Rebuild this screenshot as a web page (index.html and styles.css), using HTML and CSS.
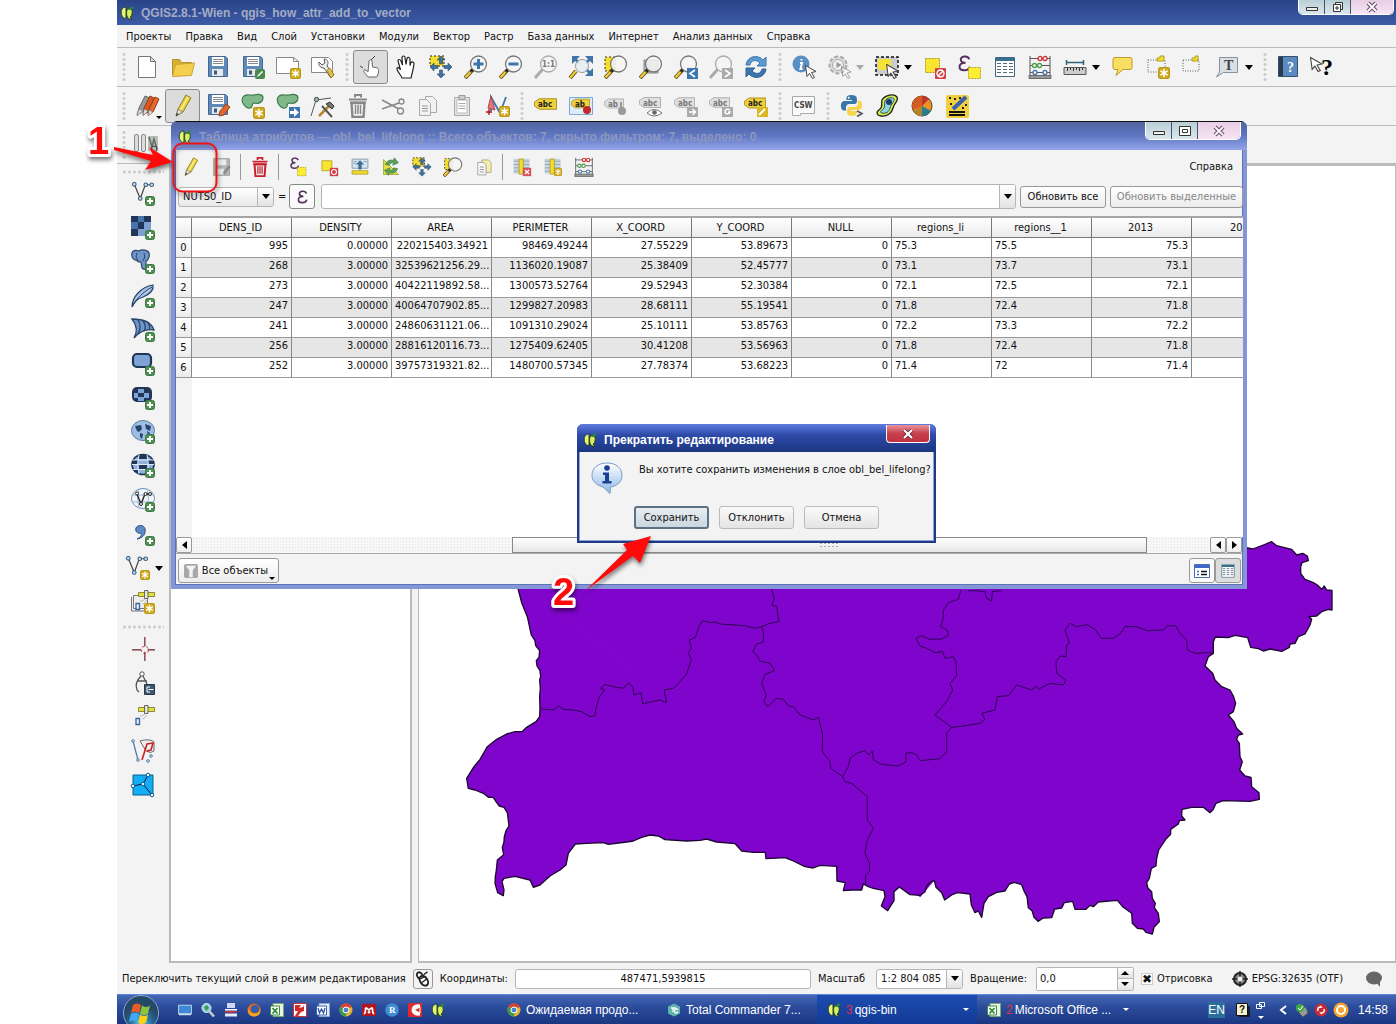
FILE: index.html
```html
<!DOCTYPE html>
<html lang="ru">
<head>
    <meta charset="UTF-8">
    <meta name="viewport" content="width=device-width, initial-scale=1.0">
    <title>QGIS2.8.1-Wien - qgis_how_attr_add_to_vector</title>
    <link rel="stylesheet" href="styles.css">
</head>
<body>
    <!-- Shared icon shapes -->
    <svg class="defs" aria-hidden="true">
        <defs>
            <linearGradient id="bubble" x2="0" y2="1"><stop stop-color="#fff"/><stop offset="1" stop-color="#8cb8e8"/></linearGradient>
            <radialGradient id="orb" cx=".5" cy=".8"><stop stop-color="#5fd0e8"/><stop offset=".6" stop-color="#2a6c9c"/><stop offset="1" stop-color="#254a68"/></radialGradient>
        </defs>
        <symbol id="plus" viewBox="0 0 10 10"><rect x=".5" y=".5" width="9" height="9" rx="2" fill="#4f8f52" stroke="#3d7a42"/><path d="M5 2v6M2 5h6" stroke="#fff" stroke-width="2"/></symbol>
        <symbol id="star" viewBox="0 0 10 10"><rect x=".5" y=".5" width="9" height="9" rx="1.5" fill="#d1ad1e" stroke="#b8961a"/><path d="M5 1.5v7M2 3.2l6 3.6M8 3.2L2 6.800" stroke="#fff" stroke-width="1.3"/></symbol>
        <symbol id="mag" viewBox="0 0 24 24"><path d="M1 23l7.500-8" stroke="#5c4b16" stroke-width="4"/><path d="M1.500 22.500l5-5.500" stroke="#f0cc3c" stroke-width="2.400"/><path d="M7.500 16l2-2" stroke="#111" stroke-width="3"/><circle cx="14.500" cy="9" r="8" fill="#f4f4f2" fill-opacity=".85" stroke="#777" stroke-width="1.300"/></symbol>
        <symbol id="maggray" viewBox="0 0 24 24"><path d="M1 23l8-9" stroke="#aaa" stroke-width="3"/><circle cx="14.500" cy="9" r="8" fill="#f4f4f4" stroke="#aaa" stroke-width="1.300"/></symbol>
        <symbol id="pencil" viewBox="0 0 24 24"><path d="M5 22l2-7L15 1l5 3-8 14z" fill="#e6cf3a" stroke="#8d7f28"/><path d="M17 3L9 17" stroke="#fff39a" stroke-width="1.500"/><path d="M5 22l2-7 5 3z" fill="#e8dcc0" stroke="#777" stroke-width=".8"/><path d="M5 22l.8-3 2 1.200z" fill="#333"/></symbol>
        <symbol id="floppy" viewBox="0 0 24 24"><path d="M2.500 1.500h17l2 2v18h-19z" fill="#5e89b8" stroke="#44688f"/><path d="M6 2h12v9H6z" fill="#fff"/><path d="M7 4.500h10M7 6.500h10M7 8.500h10" stroke="#888"/><path d="M6 14h11v7H6z" fill="#e8e8e8"/><path d="M8 15.500h3v4H8z" fill="#355b86"/></symbol>
        <symbol id="label" viewBox="0 0 24 12"><path d="M5.500.500h18v11h-18L.500 8V4z" fill="#f0d03a" stroke="#a98f1c"/></symbol>
        <symbol id="labelgray" viewBox="0 0 24 12"><path d="M5.500.500h18v11h-18L.500 8V4z" fill="#e0e0e0" stroke="#aaa"/></symbol>
        <symbol id="cursor" viewBox="0 0 12 14"><path d="M.500.500l10.500 6-4.500 1 3 5-2 1-3-5-2.500 3z" fill="#fff" stroke="#444"/></symbol>
        <symbol id="eps" viewBox="0 0 12 16"><path d="M10.500 4C9 0 2 1 2.500 4.500 2.700 7 5.500 7.300 7 7.300 3 7.300 1 9 1.300 11.500 1.700 15.500 10 15.500 11 11" fill="none" stroke="#56305c" stroke-width="1.900"/></symbol>
        <symbol id="abacus" viewBox="0 0 24 24"><path d="M2 1v21M22 1v21M2 3.500h20M2 10.500h20M2 17.500h20" stroke="#555" fill="none"/><path d="M1 20.500h22v3H1z" fill="#999" stroke="#555" stroke-width=".8"/><g fill="#fff" stroke-width="1.300"><g stroke="#c33"><circle cx="12" cy="3.500" r="2"/><circle cx="17" cy="3.500" r="2"/></g><g stroke="#4a9a4a"><circle cx="6.500" cy="10.500" r="2"/><circle cx="11.500" cy="10.500" r="2"/></g><g stroke="#4477a8"><circle cx="7" cy="17.500" r="2"/><circle cx="17" cy="17.500" r="2"/></g></g></symbol>
        <symbol id="sheet" viewBox="0 0 24 24"><path d="M2.500 2.500h19v19h-19z" fill="#fff" stroke="#3f6980"/><path d="M3 3h18v3H3z" fill="#38718f"/><path d="M4 8.500h4M10 8.500h4M16 8.500h4M4 11.500h4M10 11.500h4M16 11.500h4M4 14.500h4M10 14.500h4M16 14.500h4M4 17.500h4M10 17.500h4M16 17.500h4" stroke="#506b7a" stroke-width="1.200"/></symbol>
        <symbol id="trash" viewBox="0 0 24 24"><path d="M9 3.500V1h6v2.500M3 5.500h18M4 8.500h16" fill="none" stroke="currentColor" stroke-width="2"/><path d="M5.500 9h13l-1 14h-11z" fill="none" stroke="currentColor" stroke-width="2.400"/><path d="M9.500 11v9M12 11v9M14.500 11v9" stroke="currentColor" stroke-width="1.500"/></symbol>
        <symbol id="movesel" viewBox="0 0 24 24"><path d="M1 1h14v10H1z" fill="#f5dd2c" stroke="#222" stroke-dasharray="2"/><g fill="#41719f" stroke="#2b4d70" stroke-width=".6"><path d="M12 1l4 4h-2.500v4h-3V5H8z"/><path d="M12 23l4-4h-2.500v-4h-3v4H8z"/><path d="M1 12l4-4v2.500h4v3H5V16z"/><path d="M23 12l-4-4v2.500h-4v3h4V16z"/></g></symbol>
        <symbol id="vect" viewBox="0 0 24 24"><path d="M2.500 2.500L9 18l5.500-15h7" fill="none" stroke="#444" stroke-width="1.300"/><g fill="#c9dcf0" stroke="#33587c" stroke-width="1.100"><circle cx="2.500" cy="2.500" r="2"/><circle cx="9" cy="18" r="2"/><circle cx="15" cy="3" r="2"/><circle cx="21.500" cy="3" r="2"/></g></symbol>
        <symbol id="copy" viewBox="0 0 24 24"><g fill="#f2f2f2" stroke="#aaa"><path d="M9.500 2.500h7l4 4v12h-11z"/><path d="M3.500 5.500h7l4 4v12h-11z"/></g><path d="M6 12h6M6 14.500h6M6 17h6" stroke="#999"/></symbol>
        <symbol id="qgis" viewBox="0 0 14 14"><path d="M6 1C2 1 .500 5 1.500 8.500S5 13 6 12z" fill="#e4f57a" stroke="#173b16" stroke-width=".9"/><path d="M7.500 3C10.500 1.500 13 4 12 8c-.5 2-1 2.500-2 3l2 2.500-2.500-.5C6 12 6 5 7.500 3z" fill="#d9ee5a" stroke="#173b16" stroke-width=".9"/><path d="M8 4l3-3.500 2.500.500-2 3z" fill="#2e8a35"/></symbol>
        <symbol id="funnel" viewBox="0 0 16 16"><rect width="16" height="16" rx="2" fill="#a8a8a8"/><path d="M2 2h12l-4 5v8H6V7z" fill="#f2f2f2"/></symbol>
        <symbol id="sat" viewBox="0 0 24 24"><path d="M7.500 2.500h16v4h-16z" fill="#e2e043" stroke="#8d8a28"/><path d="M13.500.500h3.500v8h-3.500z" fill="#e8e8c8" stroke="#666"/><path d="M9 11c2 0 4-1 5-2M11 14c2 0 4-2 4.500-4" fill="none" stroke="#bbb"/><path d="M5 13.500h3.500v6H5z" fill="#eef" stroke="#3864a0" stroke-width="1.300"/></symbol>
        <symbol id="chrome" viewBox="0 0 14 14"><circle cx="7" cy="7" r="6.500" fill="#e3b52c"/><path d="M7 7L1.400 3.700A6.500 6.500 0 0 1 13 4.500H7z" fill="#d8402f"/><path d="M7 7L1.400 3.700A6.500 6.500 0 0 0 6.500 13.500L9 8z" fill="#3e9a4a"/><circle cx="7" cy="7" r="3" fill="#4a83d0" stroke="#fff"/></symbol>
        <symbol id="excel" viewBox="0 0 14 14"><path d="M3 .500h10.500v13H3z" fill="#e9f5e4" stroke="#7ba574"/><path d="M.500 3h9v9h-9z" fill="#fff" stroke="#3b8b3e"/><path d="M2.500 5l5 5.500M7.500 5l-5 5.500" stroke="#2c8a31" stroke-width="1.800"/></symbol>
        <symbol id="tc" viewBox="0 0 14 14"><path d="M7 .500l6 3v7l-6 3-6-3v-7z" fill="#5fb3a8"/><path d="M4 5h5M6 5v4M11 7c-1-2-4-1-3.500 1.500.5 2 3 2 3.500 0" stroke="#fff" fill="none" stroke-width="1.300"/></symbol>
    </svg>

    <header class="titlebar">
        <svg class="logo"><use href="#qgis"/></svg>
        <h1>QGIS2.8.1-Wien - qgis_how_attr_add_to_vector</h1>
        <div class="winbuttons main-buttons">
            <button type="button" aria-label="Свернуть"><svg viewBox="0 0 14 12"><path d="M1.500 6.500h11v3h-11z" fill="#eee" stroke="#333"/></svg></button>
            <button type="button" aria-label="Развернуть"><svg viewBox="0 0 14 12"><path d="M4.500 1.500h7v7h-7z" fill="#eee" stroke="#333"/><path d="M2.500 3.500h7v7h-7zM5 6h2v2H5z" fill="#fff" stroke="#333"/></svg></button>
            <button type="button" class="close" aria-label="Закрыть"><svg viewBox="0 0 14 12"><path d="M3 2l8 8M11 2l-8 8" stroke="#6b4a6b" stroke-width="4"/><path d="M3 2l8 8M11 2l-8 8" stroke="#fff" stroke-width="1.800"/></svg></button>
        </div>
    </header>

    <nav class="menubar">
        <a href="#">Проекты</a>
        <a href="#">Правка</a>
        <a href="#">Вид</a>
        <a href="#">Слой</a>
        <a href="#">Установки</a>
        <a href="#">Модули</a>
        <a href="#">Вектор</a>
        <a href="#">Растр</a>
        <a href="#">База данных</a>
        <a href="#">Интернет</a>
        <a href="#">Анализ данных</a>
        <a href="#">Справка</a>
    </nav>

    <div class="toolbar">
        <span class="grip"></span>
        <button type="button" aria-label="Создать"><svg viewBox="0 0 24 24"><path d="M2.500 1.500h12l5 5v16h-17z" fill="#fff" stroke="#777"/><path d="M14.500 1.500v5h5z" fill="#ddd" stroke="#777"/></svg></button>
        <button type="button" aria-label="Открыть"><svg viewBox="0 0 24 24"><path d="M1.500 20V4.500h7l2 3h10V10" fill="#d9b032" stroke="#b8932a"/><path d="M1.500 21.500l3-12 19-1.500-3 12.500z" fill="#f3cf4d" stroke="#cba635"/></svg></button>
        <button type="button" aria-label="Сохранить"><svg><use href="#floppy"/></svg></button>
        <button type="button" aria-label="Сохранить как"><svg viewBox="0 0 24 24"><use href="#floppy"/><rect x="14" y="14" width="10" height="10" rx="2" fill="#4b8a4e"/><path d="M16 22l1-2 4-4 1 1-4 4z" fill="#fff"/></svg></button>
        <button type="button" aria-label="Новый макет"><svg viewBox="0 0 24 24"><path d="M.500 2.500h17l5 4v12h-22z" fill="#fff" stroke="#888"/><path d="M17.500 2.500v4h5" fill="none" stroke="#888"/><use href="#star" x="14" y="13" width="11" height="11"/></svg></button>
        <button type="button" aria-label="Макеты"><svg viewBox="0 0 24 24"><path d="M.500 2.500h17l4 4v11h-21z" fill="#fff" stroke="#888"/><path d="M8 7l3 3 3-2-1-4c4 0 5 4 3 7l7 9-3 3-7-10c-3 0-6-2-5-6z" fill="#eee" stroke="#555"/><path d="M16 15l3-2 4 7-3 3z" fill="#e8bf35" stroke="#7c681e" stroke-width=".6"/></svg></button>
        <span class="grip"></span>
        <button type="button" class="pressed" aria-label="Касание"><svg viewBox="0 0 24 24"><path d="M9 22c-2-3-5-5-4-7 1-1 3 1 4 2l1-11c1-2 3-1 3 0l.500 6 5 1c2 1 1 7-1 9z" fill="#fff" stroke="#666"/><path d="M12 5l4-4M4 13l-3-2" stroke="#444"/></svg></button>
        <button type="button" aria-label="Прокрутка"><svg viewBox="0 0 24 24"><path d="M8 23c-1-3-6-8-5-10 1-1 3 0 3.500 2L4 6c0-2 2-2 3 0l1.500 4L8 2.500c0-2 3-2 3 0l1 7 1-6c1-2 3-1 3 1v6l1-3c1-1 3-.500 3 1-.5 6-2 10-3 14.500z" fill="#fff" stroke="#222" stroke-width="1.200"/></svg></button>
        <button type="button" aria-label="К выделенному"><svg><use href="#movesel"/></svg></button>
        <button type="button" aria-label="Увеличить"><svg viewBox="0 0 24 24"><use href="#mag"/><path d="M14.500 4v10M9.500 9h10" stroke="#3d75ae" stroke-width="3"/></svg></button>
        <button type="button" aria-label="Уменьшить"><svg viewBox="0 0 24 24"><use href="#mag"/><path d="M9.500 9h10" stroke="#3d75ae" stroke-width="3"/></svg></button>
        <button type="button" aria-label="Масштаб 1:1"><svg viewBox="0 0 24 24"><use href="#maggray"/><text class="tiny gray" x="8" y="12">1:1</text></svg></button>
        <button type="button" aria-label="Полный охват"><svg viewBox="0 0 24 24"><g fill="#3f74a6"><path d="M3 1h8L8 4l3 3-2 2-3-3-3 3zM24 1v8l-3-3-3 3-2-2 3-3-3-3zM24 21v-8l-3 3-3-3-2 2 3 3-3 3z"/></g><path d="M1 23l6-7" stroke="#665517" stroke-width="4"/><path d="M1 23l6-7" stroke="#f0cc3c" stroke-width="2"/><circle cx="13" cy="11" r="6.500" fill="#e7eef4" fill-opacity=".8" stroke="#999"/></svg></button>
        <button type="button" aria-label="Увеличить до выделенного"><svg viewBox="0 0 24 24"><path d="M1 2h10v14H1z" fill="#f5dd2c" stroke="#333" stroke-dasharray="2"/><use href="#mag"/></svg></button>
        <button type="button" aria-label="Увеличить до слоя"><svg viewBox="0 0 24 24"><path d="M5 5h14v13H5z" fill="#bbb" stroke="#888"/><use href="#mag"/></svg></button>
        <button type="button" aria-label="Предыдущий охват"><svg viewBox="0 0 24 24"><use href="#mag"/><path d="M13 13h11v11H13z" fill="#3d75ae"/><path d="M21 15l-5 3.500 5 3.500" stroke="#fff" stroke-width="1.600" fill="none"/></svg></button>
        <button type="button" aria-label="Следующий охват"><svg viewBox="0 0 24 24"><use href="#maggray"/><path d="M13 13h11v11H13z" fill="#aaa"/><path d="M16 15l5 3.500-5 3.500" stroke="#fff" stroke-width="1.600" fill="none"/></svg></button>
        <button type="button" aria-label="Обновить"><svg viewBox="0 0 24 24"><path d="M2 10C3 1 14-1 19 5l3-3v9h-9l3-3C12 4 7 5 6 10z" fill="#5c9bd0" stroke="#3d75ae"/><path d="M22 14c-1 9-12 11-17 5l-3 3v-9h9l-3 3c4 4 9 3 10-2z" fill="#3d75ae" stroke="#2f6296"/></svg></button>
        <span class="grip"></span>
        <button type="button" aria-label="Определить объекты"><svg viewBox="0 0 24 24"><circle cx="9" cy="9" r="8.500" fill="#5a8fc4"/><path d="M9.500 4v1.500M8 8h2l-1.500 6h2" stroke="#fff" stroke-width="2" fill="none"/><use href="#cursor" x="13" y="10" width="12" height="14"/></svg></button>
        <button type="button" aria-label="Действие"><svg viewBox="0 0 24 24"><circle cx="11" cy="10" r="8.500" fill="#ddd" stroke="#aaa" stroke-width="2" stroke-dasharray="4 2"/><circle cx="11" cy="10" r="5.500" fill="#eee" stroke="#aaa"/><path d="M9.500 7l5 3-5 3z" fill="#999"/><use href="#cursor" x="14" y="11" width="11" height="13" opacity=".5"/></svg></button>
        <span class="more off"></span>
        <button type="button" aria-label="Выделение"><svg viewBox="0 0 24 24"><path d="M1 2h22v18H1z" fill="#c9cdd0" stroke="#111" stroke-width="1.500" stroke-dasharray="3 2"/><path d="M3 4h13v11H3z" fill="#f7e23a"/><use href="#cursor" x="11" y="9" width="13" height="15"/></svg></button>
        <span class="more"></span>
        <button type="button" aria-label="Снять выделение"><svg viewBox="0 0 24 24"><path d="M2.500 3.500h14v14h-14z" fill="#f9e52f" stroke="#b09c20" stroke-dasharray="2 1"/><rect x="12" y="13" width="11" height="11" rx="1" fill="#d04048"/><circle cx="17.500" cy="18.500" r="3.500" fill="none" stroke="#fff" stroke-width="1.400"/><path d="M15 21l5-5" stroke="#fff" stroke-width="1.400"/></svg></button>
        <button type="button" aria-label="Выделить по выражению"><svg viewBox="0 0 24 24"><use href="#eps" width="13" height="17"/><path d="M10.500 12.500h12v11h-12z" fill="#fbee33" stroke="#b8a51f" stroke-dasharray="2 1"/></svg></button>
        <button type="button" aria-label="Таблица атрибутов"><svg><use href="#sheet"/></svg></button>
        <button type="button" aria-label="Калькулятор полей"><svg><use href="#abacus"/></svg></button>
        <button type="button" aria-label="Измерить"><svg viewBox="0 0 24 24"><path d="M3 7.500h18M3.500 5v5M20.500 5v5" stroke="#2f5f7c" stroke-width="1.500"/><path d="M1 12.500h22v7H1z" fill="#ccc" stroke="#555"/><path d="M4.500 13v3M7.500 13v2M10.500 13v3M13.500 13v2M16.500 13v3M19.500 13v2" stroke="#333"/></svg></button>
        <span class="more"></span>
        <button type="button" aria-label="Подсказки"><svg viewBox="0 0 24 24"><path d="M3 2.500h16q2 0 2 2v8q0 2-2 2h-7L5 20.500l2-6H4q-2 0-2-2v-8q0-2 2-2z" fill="#f8df62" stroke="#c09a2a"/></svg></button>
        <button type="button" aria-label="Новая закладка"><svg viewBox="0 0 24 24"><path d="M2 5h17v12H2z" fill="none" stroke="#555" stroke-dasharray="1 1.500"/><path d="M11 6V3h3V1h4v5z" fill="#f2dc35" stroke="#b09c20"/><use href="#star" x="12" y="12" width="12" height="12"/></svg></button>
        <button type="button" aria-label="Закладки"><svg viewBox="0 0 24 24"><path d="M2 5h16v11H2z" fill="none" stroke="#555" stroke-dasharray="1 1.500"/><path d="M11 6V3h3V1h3v5z" fill="#f2dc35" stroke="#b09c20"/></svg></button>
        <button type="button" aria-label="Аннотация"><svg viewBox="0 0 24 24"><path d="M3.500 2.500h18v15h-14L.500 22l3-5z" fill="#d8dfe6" stroke="#8a929a"/><text class="serif" x="8" y="15">T</text></svg></button>
        <span class="more"></span>
        <span class="grip"></span>
        <button type="button" aria-label="Содержание"><svg viewBox="0 0 24 24"><path d="M1.500 1.500h19v20h-19z" fill="#5a8ac0" stroke="#33506e"/><path d="M2 2h4v19H2z" fill="#2a3b4c"/><text class="serif white" x="10" y="17">?</text></svg></button>
        <button type="button" aria-label="Что это?"><svg viewBox="0 0 24 24"><use href="#cursor" x="-2" y="1" width="13" height="17"/><text class="serif big" x="9" y="20">?</text></svg></button>
    </div>

    <div class="toolbar">
        <span class="grip"></span>
        <button type="button" class="has-menu" aria-label="Текущие правки"><svg viewBox="0 0 24 24"><path d="M1 21l2-7L9 2l5 2-6 13z" fill="#999" stroke="#666"/><path d="M7 21l1-7 6-12 4 2-6 14z" fill="#e0561e" stroke="#8d3c1a"/><path d="M12 21l1-6 6-12 4 2-6 13z" fill="#e8682c" stroke="#8d3c1a"/><path d="M1 22l2-7 4 2zM7 22l1-7 4 2zM12 22l1-6 4 2z" fill="#ddd" stroke="#777" stroke-width=".6"/></svg></button>
        <button type="button" class="pressed" aria-label="Режим редактирования"><svg><use href="#pencil"/></svg></button>
        <button type="button" aria-label="Сохранить правки"><svg viewBox="0 0 24 24"><use href="#floppy" y="-1"/><path d="M13 22l1-5 6-7 4 3-6 8z" fill="#e0662e" stroke="#8d4a25"/></svg></button>
        <button type="button" aria-label="Добавить объект"><svg viewBox="0 0 24 24"><path d="M2 3C5-1 9 2 13 1s9-1 9 3-4 6-8 5c-2 0-3 1-3 3s-3 3-6 1S0 6 2 3z" fill="#7fb98a" stroke="#3e7a4c" stroke-width="1.200"/><use href="#star" x="12" y="13" width="12" height="12"/></svg></button>
        <button type="button" aria-label="Переместить объект"><svg viewBox="0 0 24 24"><path d="M2 3C5-1 9 2 13 1s9-1 9 3-4 6-8 5c-2 0-3 1-3 3s-3 3-6 1S0 6 2 3z" fill="#7fb98a" stroke="#3e7a4c" stroke-width="1.200"/><path d="M13 13h11v11H13z" fill="#3d75ae"/><path d="M14 17h4v-3l5 4.500-5 4.500v-3h-4z" fill="#fff"/></svg></button>
        <button type="button" aria-label="Узлы"><svg viewBox="0 0 24 24"><path d="M5 6L0 22M5 6l15-2" stroke="#555"/><circle cx="5.500" cy="5.500" r="2.200" fill="#9ab79f" stroke="#444"/><path d="M8 22L19 11" stroke="#b98030" stroke-width="2.500"/><path d="M11 12l10 11" stroke="#555" stroke-width="2"/><path d="M15 10l4-2 4 4-2 3z" fill="#777" stroke="#333"/></svg></button>
        <button type="button" class="trash-gray" aria-label="Удалить выделенное"><svg><use href="#trash"/></svg></button>
        <button type="button" aria-label="Вырезать"><svg viewBox="0 0 24 24"><path d="M1 6l17 9M1 15l17-6" stroke="#888" stroke-width="1.600"/><circle cx="20.500" cy="7.500" r="2.500" fill="none" stroke="#888" stroke-width="1.300"/><circle cx="19.500" cy="17" r="3" fill="none" stroke="#888" stroke-width="1.300"/></svg></button>
        <button type="button" aria-label="Копировать"><svg><use href="#copy"/></svg></button>
        <button type="button" aria-label="Вставить"><svg viewBox="0 0 24 24"><path d="M3.500 3.500h15v18h-15z" fill="#e4e4e4" stroke="#aaa"/><path d="M6 6h10v13H6z" fill="#fff" stroke="#bbb"/><path d="M8 1.500h6v4H8z" fill="#ccc" stroke="#999"/><path d="M7.500 9.500h7M7.500 12h7M7.500 14.500h7" stroke="#aaa"/></svg></button>
        <button type="button" aria-label="Расширенная оцифровка"><svg viewBox="0 0 24 24"><path d="M5 17V3l9 16 6-16" fill="none" stroke="#3d75ae" stroke-width="1.800"/><path d="M2 14l3-12 4 14z" fill="#e0787c" stroke="#b0484c"/><path d="M3 15v6M0 18h6" stroke="#a11" stroke-width="1.300"/><use href="#star" x="13" y="12" width="11" height="11"/></svg></button>
        <span class="grip"></span>
        <button type="button" aria-label="Подписи"><svg viewBox="0 0 24 24"><use href="#label" x="0" y="4" width="23" height="12"/><text class="tiny" x="4" y="13">abc</text></svg></button>
        <button type="button" aria-label="Закреплённые подписи"><svg viewBox="0 0 24 24"><path d="M.500 3.500h23v17H.500z" fill="#dcecfb" stroke="#7fa8d6"/><use href="#label" x="2" y="4" width="19" height="11"/><text class="tiny" x="6" y="13">ab</text><circle cx="18" cy="16" r="4" fill="#c3282d"/></svg></button>
        <button type="button" aria-label="Закрепить подпись"><svg viewBox="0 0 24 24"><use href="#labelgray" x="0" y="4" width="20" height="11"/><text class="tiny gray" x="4" y="13">ab</text><circle cx="18" cy="17" r="4" fill="#999"/><path d="M17 8v7" stroke="#999" stroke-width="2"/></svg></button>
        <button type="button" aria-label="Показать подпись"><svg viewBox="0 0 24 24"><use href="#labelgray" x="0" y="3" width="22" height="11"/><text class="tiny gray" x="4" y="12">abc</text><path d="M8 19q7-7 15 0-8 6-15 0z" fill="#fff" stroke="#777"/><circle cx="15.500" cy="18.500" r="2.300" fill="#666"/></svg></button>
        <button type="button" aria-label="Переместить подпись"><svg viewBox="0 0 24 24"><use href="#labelgray" x="0" y="3" width="21" height="11"/><text class="tiny gray" x="4" y="12">abc</text><path d="M13 13h11v10H13z" fill="#aaa"/><path d="M15 18h6M18.500 15l3 3-3 3" stroke="#fff" stroke-width="1.500" fill="none"/></svg></button>
        <button type="button" aria-label="Повернуть подпись"><svg viewBox="0 0 24 24"><use href="#labelgray" x="0" y="3" width="21" height="11"/><text class="tiny gray" x="4" y="12">abc</text><path d="M13 13h11v10H13z" fill="#aaa"/><path d="M21 16c-3-2-5 0-5 2s4 3 5 0h-2" stroke="#fff" stroke-width="1.500" fill="none"/></svg></button>
        <button type="button" aria-label="Изменить подпись"><svg viewBox="0 0 24 24"><use href="#label" x="0" y="3" width="22" height="12"/><text class="tiny" x="4" y="12">abc</text><path d="M13 13h11v10H13z" fill="#d9b622"/><path d="M15 21l6-6" stroke="#fff" stroke-width="2"/></svg></button>
        <span class="grip"></span>
        <button type="button" aria-label="CSW"><svg viewBox="0 0 24 24"><path d="M.500 2.500h22v17h-14v2h-8z" fill="#fafafa" stroke="#aaa"/><text class="mono" x="2" y="14">CSW</text></svg></button>
        <span class="grip"></span>
        <button type="button" aria-label="Консоль Python"><svg viewBox="0 0 24 24"><path d="M11 1c-5 0-4.500 3-4.500 5H12v1H4c-4 0-4 9-.500 9.500H6V13c0-2 2-3 3-3h5c3 0 3-2 3-4s0-5-6-5z" fill="#3b76a8"/><path d="M12 22c5 0 5-3 5-5h-6v-1h8c4 0 4-9 .500-9.500H18V10c0 2-2 3-3 3h-5c-2 0-3 2-3 4s0 5 5 5z" fill="#f7d44c"/><circle cx="8.800" cy="3.700" r="1" fill="#fff"/><path d="M17 17l5 2.500-5 3" fill="none" stroke="#555" stroke-width="1.600"/></svg></button>
        <button type="button" aria-label="Интерполяция"><svg viewBox="0 0 24 24"><path d="M7 6C10 1 19-1 22 3c2 4-3 6-4 11s-6 9-12 8-4-5-1-7 1-6 2-9z" fill="#d8ec4e" stroke="#222" stroke-width="1.300"/><path d="M10 7c2-4 8-4 9-2s-3 5-4 9-4 6-8 5 1-3 2-5 0-4 1-7z" fill="#8fd1e8" stroke="#2a5b3a"/><circle cx="14" cy="8" r="3" fill="#1f3b6e"/></svg></button>
        <button type="button" aria-label="Статистика"><svg viewBox="0 0 24 24"><circle cx="12" cy="12" r="10" fill="#e89322" stroke="#60411c"/><path d="M12 12V2A10 10 0 0 0 3 16z" fill="#d45a26"/><path d="M12 12l9 5a10 10 0 0 1-9 5z" fill="#2a7d8c"/><path d="M12 12v10a10 10 0 0 1-8.500-5z" fill="#b5832a"/><path d="M12 12V2a10 10 0 0 1 7 3z" fill="#c23427"/></svg></button>
        <button type="button" aria-label="Оцифровщик"><svg viewBox="0 0 24 24"><rect x="1" y="1" width="23" height="23" rx="2" fill="#efcf3d"/><path d="M4 3h2v2H4zM9 4h2v2H9zM5 9h2v2H5zM14 3h2v2h-2zM17 13h2v2h-2zM20 10h2v2h-2z" fill="#222"/><path d="M21 3L8 15" stroke="#3c5fb0" stroke-width="4"/><path d="M4 18h16M4 21h16" stroke="#111" stroke-width="2"/></svg></button>
    </div>

    <div class="toolbar labelbar">
        <span class="grip"></span>
        <button type="button" aria-label="Гистограмма"><svg viewBox="0 0 24 24"><g fill="#ddd" stroke="#888"><rect x="-1.500" y="1.500" width="4" height="17" rx="1.500"/><rect x="5.500" y="1.500" width="4" height="17" rx="1.500"/></g><path d="M12 3h10v15H12z" fill="#bbb"/><path d="M13 4l3 10 2-8 3 10" stroke="#5d6f60" stroke-width="1.500" fill="none"/><circle cx="18" cy="16" r="3" fill="none" stroke="#444"/></svg></button>
    </div>

    <main class="workspace">
        <div class="sidebar">
            <span class="grip-h"></span>
            <button type="button" aria-label="Векторный слой"><svg viewBox="0 0 24 24"><use href="#vect" width="24" height="22"/><use href="#plus" x="14" y="14" width="10" height="10"/></svg></button>
            <button type="button" aria-label="Растровый слой"><svg viewBox="0 0 24 24"><path d="M0 0h20v20H0z" fill="#7ea0d0"/><path d="M0 0h7v6H0zM13 0h7v6h-7zM7 6h6v7H7zM0 13h7v7H0z" fill="#1f3658"/><path d="M7 0h6v6H7zM0 6h7v7H0z" fill="#4a72ab"/><use href="#plus" x="14" y="14" width="10" height="10"/></svg></button>
            <button type="button" aria-label="PostGIS"><svg viewBox="0 0 24 24"><path d="M1 3c1-3 4-3 7-2 3-2 9-1 10 2s-1 8-3 8v6q-1 4-4 1l-1-6c-3 0-4-1-4-2-3 1-6-3-5-7z" fill="#6f95c9" stroke="#2a4468" stroke-width="1.200"/><path d="M6 3q-2 5 1 7M13 3q2 4-1 8" fill="none" stroke="#2a4468"/><use href="#plus" x="14" y="14" width="10" height="10"/></svg></button>
            <button type="button" aria-label="SpatiaLite"><svg viewBox="0 0 24 24"><path d="M1 23C1 13 10 3 22 1c1 5-3 9-10 12-6 2-8 4-11 10z" fill="#a9c5e8" stroke="#2a4468" stroke-width="1.200"/><path d="M1 23C6 14 12 8 21 3" fill="none" stroke="#2a4468"/><use href="#plus" x="14" y="14" width="10" height="10"/></svg></button>
            <button type="button" aria-label="MSSQL"><svg viewBox="0 0 24 24"><path d="M1 1c10 0 19 2 22 11-6-1-13 0-20 8 4-7 2-14-2-19z" fill="#6f95c9" stroke="#2a4468" stroke-width="1.300"/><path d="M7 2c3 5 3 9 0 14M12 3c3 4 3 7 1 10M17 5c2 3 2 5 1 7" fill="none" stroke="#2a4468" stroke-width="1.300"/><use href="#plus" x="14" y="14" width="10" height="10"/></svg></button>
            <button type="button" aria-label="Oracle"><svg viewBox="0 0 24 24"><rect x="2" y="2" width="18" height="13" rx="4" fill="#7ea3d6" stroke="#1f3658" stroke-width="2.200"/><use href="#plus" x="14" y="14" width="10" height="10"/></svg></button>
            <button type="button" aria-label="Oracle растр"><svg viewBox="0 0 24 24"><rect x="1" y="1" width="20" height="15" rx="5" fill="#1f3658"/><path d="M7 3h6v4H7zM3 7h4v5H3zM13 7h5v5h-5zM7 11h6v4H7z" fill="#7ea3d6"/><use href="#plus" x="14" y="14" width="10" height="10"/></svg></button>
            <button type="button" aria-label="WMS"><svg viewBox="0 0 24 24"><ellipse cx="12" cy="10.500" rx="11.500" ry="10" fill="#9dbde4" stroke="#5b7ba4"/><path d="M4 6l6-1 1 4-3 3-2-1zM14 4l6 2-1 5-4-2zM9 13l3 1-1 5-2-2zM16 11l3 2-2 3z" fill="#28436b"/><use href="#plus" x="14" y="14" width="10" height="10"/></svg></button>
            <button type="button" aria-label="WCS"><svg viewBox="0 0 24 24"><ellipse cx="12" cy="10.500" rx="11" ry="10" fill="#8fb2de" stroke="#1f3658" stroke-width="1.600"/><path d="M8 1h8v4H8zM2 6h5v4H2zM17 6h5v4h-5zM8 11h8v4H8zM3 15h4v3H3z" fill="#1f3658"/><path d="M1 6h22M1 10.500h22M2 15.500h20M8 1q-3 9 0 19M16 1q3 9 0 19" stroke="#dce8f6" fill="none"/><use href="#plus" x="14" y="14" width="10" height="10"/></svg></button>
            <button type="button" aria-label="WFS"><svg viewBox="0 0 24 24"><ellipse cx="12" cy="10.500" rx="11.500" ry="10" fill="#f2f6fb" stroke="#6f8fb8"/><path d="M1 7h22M1 14h22M8 1q-3 9 0 19M16 1q3 9 0 19" stroke="#9ab6d8" fill="none"/><path d="M6 6l4 10 4-10h4" stroke="#222" fill="none" stroke-width="1.400"/><g fill="#fff" stroke="#222"><circle cx="6" cy="5.500" r="1.500"/><circle cx="10" cy="16" r="1.500"/><circle cx="14.500" cy="6" r="1.500"/><circle cx="19" cy="6" r="1.500"/></g><use href="#plus" x="14" y="14" width="10" height="10"/></svg></button>
            <button type="button" aria-label="Текст с разделителями"><svg viewBox="0 0 24 24"><path d="M6 17c4-2 5-4 4-6-4 1-6-2-5-5s8-4 9 1-2 9-8 10z" fill="#5b8bc4" stroke="#2a4f80"/><use href="#plus" x="14" y="14" width="10" height="10"/></svg></button>
            <button type="button" class="side-menu" aria-label="Создать слой"><svg viewBox="0 0 24 24"><use href="#vect" x="-6" width="24" height="22"/><use href="#star" x="9" y="14" width="10" height="10"/></svg></button>
            <button type="button" aria-label="GPX"><svg viewBox="0 0 24 24"><path d="M.500 7v14h14M2.500 5.500h14v13h-14z" fill="#eee" stroke="#777"/><use href="#sat" width="24" height="24"/><use href="#star" x="13" y="13" width="11" height="11"/></svg></button>
            <span class="grip-h"></span>
            <button type="button" aria-label="Захват координат"><svg viewBox="0 0 26 26"><path d="M15 0v10M15 16v10M1 14h10M18 14h8" stroke="#6b2430" stroke-width="1.300"/><circle cx="15" cy="14" r="4" fill="none" stroke="#c33" stroke-dasharray="3 2"/></svg></button>
            <button type="button" aria-label="Dxf2Shp"><svg viewBox="0 0 24 24"><circle cx="11" cy="3" r="2.200" fill="#fff" stroke="#555"/><path d="M10 5c-4 4-6 9-4 14l2 2M12 5l4 8M6 10h10" fill="none" stroke="#555" stroke-width="1.300"/><path d="M13.500 13.500h10v10h-10z" fill="#3f5a70" stroke="#22394b"/><path d="M19 16h-3v5h3M17.500 18.500h5" fill="none" stroke="#fff"/></svg></button>
            <button type="button" aria-label="GPS"><svg><use href="#sat"/></svg></button>
            <button type="button" aria-label="Топология"><svg viewBox="0 0 24 24"><path d="M2 2l5 19" stroke="#4477a8" stroke-width="1.200"/><path d="M9 2c6-2 13-1 14 1v9q-3 3-8 0z" fill="#eee" stroke="#666"/><path d="M11 21l5-16 6-1-2 7-4 1" fill="none" stroke="#c22" stroke-width="1.600"/><g fill="#fff" stroke="#4477a8"><circle cx="2" cy="2" r="1.300"/><circle cx="7" cy="21" r="1.300"/><circle cx="20" cy="17" r="1.300"/><circle cx="17" cy="22" r="1.300"/></g></svg></button>
            <button type="button" aria-label="Проверка топологии"><svg viewBox="0 0 24 24"><path d="M2 2h20v20H2z" fill="#12aef5" stroke="#0c5f8e"/><path d="M2 13l10-2 5-9M12 11l9 11" stroke="#114" fill="none"/><g fill="#fff" stroke="#0c5f8e"><circle cx="2" cy="13" r="1.800"/><circle cx="12" cy="11" r="1.800"/><circle cx="17" cy="2" r="1.800"/><circle cx="21" cy="22" r="1.800"/></g></svg></button>
        </div>
        <section class="layers"></section>
        <section class="map">
            <svg viewBox="0 0 976 797" preserveAspectRatio="xMinYMin slice" role="img" aria-label="Карта">
                <g transform="translate(461 364) scale(.33333)">
                    <path class="land" d="M-1080 150V52H1000L120 1096z"/>
                    <path class="outline" d="M120 1096L135 1085 140 1068 152 1056 163 1052 168 1072 185 1088 194 1110 215 1095 232 1088 270 1092 274 1125 285 1148 295 1143 305 1162 312 1120 325 1100 350 1087 375 1083 388 1062 403 1057 425 1064 433 1085 441 1100 445 1133 456 1142 462 1162 474 1174 490 1164 515 1163 524 1137 545 1134 553 1118 578 1114 585 1138 618 1138 630 1126 640 1130 655 1116 712 1111 728 1130 755 1150 757 1180 772 1195 790 1197 798 1207 817 1212 822 1192 838 1175 835 1150 823 1133 826 1120 817 1105 815 1085 804 1075 800 1058 808 1045 814 1015 828 1008 830 985 836 960 858 927 872 913 872 898 895 882 898 872 915 870 905 858 906 838 935 832 970 832 990 848 1000 838 1008 820 1030 812 1110 814 1138 808 1137 788 1115 770 1113 742 1095 738 1079 720 1087 695 1080 680 1078 640 1070 628 1075 615 1088 612 1070 595 1062 575 1045 555 1060 545 1067 520 1060 498 1050 480 1025 470 1005 450 998 430 975 408 985 380 1000 370 1000 335 1006 321 1045 323 1065 316 1103 323 1112 352 1135 356 1150 363 1170 357 1205 364 1228 352 1230 342 1245 340 1255 320 1275 312 1290 285 1295 268 1287 260 1310 258 1325 245 1345 238 1356 240 1356 181 1340 180 1333 168 1325 178 1312 165 1300 158 1275 148 1262 130 1262 110 1266 98 1285 92 1282 78 1268 70 1250 75 1235 58 1190 47 1175 35 1150 45 1118 57 1095 52 1000 52"/>
                </g>
                <g transform="translate(41 414) scale(.33333)">
                    <path class="outline" d="M175 0L175 30 185 68 202 110 214 165 225 182 227 197 239 212 237 232 229 242 231 258 240 272 242 290 239 300 241 325 239 350 240 385 239 410 228 425 200 442 186 455 165 455 140 462 110 478 82 500 60 538 42 560 20 595 25 625 45 630 70 640 85 652 100 652 108 665 118 678 132 682 142 698 147 738 138 752 133 770 132 785 127 803 131 824 112 840 109 870 106 890 105 910 113 938 130 947 132 930 126 905 132 895 165 889 210 900 220 922 240 915 270 888 300 870 318 855 325 820 346 792 380 790 430 788 445 793 500 786 520 783 545 772 570 765 595 768 615 779 680 783 720 781 740 777 770 786 825 791 845 813 880 817 916 817 918 836 975 833 1000 843 1035 860 1060 864 1080 856 1130 859 1131 903 1156 908 1150 932 1175 930 1205 930 1210 912 1225 920 1240 925 1272 932 1275 950 1264 978 1283 992 1302 962 1302 935 1318 921 1350 944 1380 946"/>
                    <path class="border" d="M935 25L943 55 936 75 951 80 953 105 957 124 930 130 905 140 885 145 855 137 780 132 765 126 750 128 727 122 718 138 706 172 688 180 694 205 684 218 694 238 680 282 660 305 640 325 612 330 620 368 600 360 575 365 548 371 543 338 522 345 518 320 505 308 490 325 460 320 435 313 422 325 435 330 418 350 408 385 405 407 390 410 365 395 340 390 310 388 297 378 280 390 242 387"/>
                    <path class="border" d="M905 140L911 160 909 187 890 192 878 215 890 225 900 243 930 250 944 272 915 283 905 310 918 345 912 365 922 380 950 355 970 358 985 378 1000 380 1020 405 1060 420 1075 412 1080 430 1088 465 1087 515 1110 545 1112 565 1148 590 1155 605 1175 610 1222 650 1222 720 1240 745 1220 785 1215 820 1229 850 1228 875 1217 885 1216 915"/>
                    <path class="border" d="M1148 590L1165 560 1170 535 1190 520 1215 512 1225 525 1237 513 1240 540 1265 553 1315 558 1338 545 1338 520 1355 518 1370 525 1380 542"/>
                </g>
                <g transform="translate(461 364) scale(.33333)">
                    <path class="border" d="M120 692L180 686 200 665 200 610 215 592 165 555 200 515 218 480 210 460 230 437 228 395 220 380 195 385 188 365 165 368 140 355 120 348 107 325 125 317 150 328 185 327 206 315 202 300 182 290 190 265 190 240 205 218 235 208 243 180"/>
                    <path class="border" d="M215 592L250 588 300 580 315 568 305 550 345 540 352 500 385 497 410 465 455 480 470 468 475 478 510 460 550 465 557 450 530 430 528 395 540 378 558 380 560 345 568 340 555 300 570 280 590 290 620 284 645 298 665 325 700 325 720 312 735 290 770 290 800 302 850 300 862 287 888 288 900 310 920 330 922 360 945 370 985 368 1000 368"/>
                    <path class="border" d="M265 182L300 183 315 185 320 205 335 213 337 185 365 182"/>
                </g>
            </svg>
        </section>
    </main>

    <footer class="statusbar">
        <span class="hint">Переключить текущий слой в режим редактирования</span>
        <button type="button" class="mouse" aria-label="Охват"><svg viewBox="0 0 18 18"><ellipse cx="6" cy="6" rx="3" ry="5" fill="#fff" stroke="#222" stroke-width="2" transform="rotate(-35 6 6)"/><ellipse cx="10" cy="11" rx="4" ry="6" fill="#fff" stroke="#222" stroke-width="2.200" transform="rotate(-35 10 11)"/><path d="M6 9l5-3M10 4l4-3M8 13l5-4" stroke="#222" stroke-width="1.500"/></svg></button>
        <label for="coords">Координаты:</label>
        <input type="text" id="coords" class="coords" value="487471,5939815">
        <label for="scale" class="scale-label">Масштаб</label>
        <div class="combo scale">
            <select id="scale"><option>1:2 804 085</option></select>
            <span class="drop"></span>
        </div>
        <label for="rotation">Вращение:</label>
        <div class="spin">
            <input type="text" id="rotation" value="0,0">
            <div class="spin-buttons">
                <button type="button" class="up" aria-label="Больше"></button>
                <button type="button" class="down" aria-label="Меньше"></button>
            </div>
        </div>
        <label class="render"><input type="checkbox" checked>Отрисовка</label>
        <a href="#" class="crs"><svg viewBox="0 0 16 16"><circle cx="8" cy="8" r="6" fill="#888" stroke="#222" stroke-width="2"/><path d="M8 0v16M0 8h16" stroke="#222" stroke-width="1.500"/><circle cx="8" cy="8" r="2.500" fill="#eee"/></svg>EPSG:32635 (OTF)</a>
        <button type="button" class="messages" aria-label="Сообщения"><svg viewBox="0 0 18 16"><ellipse cx="9" cy="7" rx="8" ry="6.500" fill="#666"/><path d="M11 11l4 5V8z" fill="#666"/></svg></button>
    </footer>

    <div class="taskbar">
        <button type="button" class="start" aria-label="Пуск"><svg viewBox="0 0 40 30"><circle cx="20" cy="18" r="17.500" fill="url(#orb)" stroke="#8ea6c8"/><path d="M12 10q4-3 8 0l-2 8q-4-3-8 0z" fill="#ee5a24"/><path d="M21 10.500q4 3 8 0l-2 8q-4 3-8 0z" fill="#8cc63f"/><path d="M10 19q4-3 8 0l-2 8q-4-3-8 0z" fill="#3fa9f5"/><path d="M19 19.500q4 3 8 0l-2 8q-4 3-8 0z" fill="#fcd116"/></svg></button>
        <div class="quick">
            <a href="#" aria-label="Рабочий стол"><svg viewBox="0 0 16 14"><path d="M.500 1.500h15v10H.500z" fill="#3f8ad8" stroke="#cde"/><path d="M1 12h14" stroke="#cde" stroke-width="2"/></svg></a>
            <a href="#" aria-label="Поиск"><svg viewBox="0 0 14 14"><circle cx="5.500" cy="5" r="4.500" fill="#8fd0e0" stroke="#d8e8f0"/><path d="M3 4l3-2 2 3-3 3z" fill="#3c9a4c"/><path d="M8 8l5 5.500" stroke="#ccc" stroke-width="2.500"/></svg></a>
            <a href="#" aria-label="Total Commander"><svg viewBox="0 0 14 14"><path d="M3 0h8v5H3z" fill="#cdd9f2"/><path d="M1 6h12v1.500H1z" fill="#fff"/><path d="M1 8h12v1.500H1z" fill="#d33"/><path d="M1 10.500h12v3H1z" fill="#e8ecf6"/></svg></a>
            <a href="#" aria-label="Firefox"><svg viewBox="0 0 14 14"><circle cx="7" cy="7" r="6.500" fill="#e2661f"/><circle cx="8" cy="6" r="4" fill="#2d5fae"/><path d="M1 5q2 7 9 5 3-1 3-5 2 8-6 8.500Q0 13 1 5z" fill="#f5a623"/></svg></a>
            <a href="#" aria-label="Excel"><svg><use href="#excel"/></svg></a>
            <a href="#" aria-label="Редактор"><svg viewBox="0 0 14 14"><path d="M.500.500h13v13H.500z" fill="#fff" stroke="#c33"/><path d="M2 2h6L6 5l4-1 1-2v6l-3 1-3 4H2l3-5H2z" fill="#d22a2a"/></svg></a>
            <a href="#" aria-label="Word"><svg viewBox="0 0 14 14"><path d="M3 .500h10.500v13H3z" fill="#e4ecfa" stroke="#8aa4d0"/><path d="M.500 3h10v9H.500z" fill="#fff" stroke="#3b62b0"/><path d="M2 5l1.500 5L5.500 6l2 4L9 5" fill="none" stroke="#2c55a8" stroke-width="1.300"/></svg></a>
            <a href="#" aria-label="Chrome"><svg><use href="#chrome"/></svg></a>
            <a href="#" aria-label="Mendeley"><svg viewBox="0 0 16 14"><path d="M0 0h16v14H0z" fill="#b4161f"/><path d="M2 11q2 0 2-5 0-3 4 1 4-4 4-1 0 5 2 5" fill="none" stroke="#fff" stroke-width="2"/><circle cx="8" cy="9.500" r="1.500" fill="#fff"/></svg></a>
            <a href="#" aria-label="RStudio"><svg viewBox="0 0 14 14"><circle cx="7" cy="7" r="6.800" fill="#3f8ed4"/><text class="serif-s" x="4" y="10">R</text></svg></a>
            <a href="#" aria-label="Clip"><svg viewBox="0 0 14 14"><path d="M0 0h14v14H0z" fill="#dd2a2a"/><path d="M12 2Q4 1 4 7t8 5M6 7l6-3v6z" fill="#fff" stroke="#fff"/></svg></a>
            <a href="#" aria-label="QGIS"><svg><use href="#qgis"/></svg></a>
        </div>
        <div class="tasks">
            <button type="button"><svg><use href="#chrome"/></svg>Ожидаемая продо...</button>
            <button type="button"><svg><use href="#tc"/></svg>Total Commander 7...</button>
            <button type="button" class="active"><svg><use href="#qgis"/></svg><span class="count">3</span>qgis-bin<i class="caret"></i></button>
            <button type="button"><svg><use href="#excel"/></svg><span class="count">2</span>Microsoft Office ...<i class="caret"></i></button>
        </div>
        <div class="tray">
            <span class="lang">EN</span>
            <svg viewBox="0 0 14 14"><path d="M.500.500h11v12H.500z" fill="#f6f1cf" stroke="#111"/><path d="M3 13h10V3" fill="none" stroke="#111" stroke-width="1.500"/><text class="help" x="3" y="10">?</text></svg>
            <svg class="restore" viewBox="0 0 12 20"><path d="M4.500 2.500h5v4h-5zM1.500 4.500h5v4h-5z" fill="#23489c" stroke="#fff"/><path d="M3 16h6l-3 3z" fill="#fff"/></svg>
            <svg class="chev" viewBox="0 0 10 14"><path d="M8 3L3 7l5 4" fill="none" stroke="#fff" stroke-width="2"/></svg>
            <svg viewBox="0 0 14 14"><path d="M4 5l7-1 2 6-5 4-4-4z" fill="#999" stroke="#555"/><circle cx="5" cy="5" r="4" fill="#3faa46"/><path d="M3 5l2 2 3-4" stroke="#fff" fill="none"/></svg>
            <svg viewBox="0 0 14 14"><circle cx="7" cy="7" r="6.500" fill="#c62a35"/><path d="M4 8q-1-4 3-4l-1-1M10 6q1 4-3 4l1 1" stroke="#fff" stroke-width="1.500" fill="none"/></svg>
            <svg class="avast" viewBox="0 0 16 16"><circle cx="8" cy="8" r="7.500" fill="#f4a32c"/><circle cx="8" cy="8" r="4" fill="none" stroke="#fff" stroke-width="2"/></svg>
            <time>14:58</time>
        </div>
    </div>

    <section class="window attributes">
        <header class="window-title">
            <svg class="logo"><use href="#qgis"/></svg>
            <h2>Таблица атрибутов — obl_bel_lifelong :: Всего объектов: 7, скрыто фильтром: 7, выделено: 0</h2>
            <div class="winbuttons">
                <button type="button" aria-label="Свернуть"><svg viewBox="0 0 14 12"><path d="M1.500 6.500h11v3h-11z" fill="#eee" stroke="#333"/></svg></button>
                <button type="button" aria-label="Развернуть"><svg viewBox="0 0 14 12"><path d="M1.500 1.500h11v9h-11zM4.500 4.500h5v3h-5z" fill="#fff" stroke="#333"/></svg></button>
                <button type="button" class="close" aria-label="Закрыть"><svg viewBox="0 0 14 12"><path d="M3 2l8 8M11 2l-8 8" stroke="#6b4a6b" stroke-width="4"/><path d="M3 2l8 8M11 2l-8 8" stroke="#fff" stroke-width="1.800"/></svg></button>
            </div>
        </header>
        <div class="attr-tools">
            <button type="button" aria-label="Режим редактирования"><svg><use href="#pencil"/></svg></button>
            <button type="button" aria-label="Сохранить правки"><svg viewBox="0 0 24 24"><path d="M2 2h19v20H2z" fill="#b5b5b5" stroke="#999"/><path d="M5 3h12v7H5zM5 14h9v7H5z" fill="#eee"/><path d="M14 20l7-9" stroke="#888" stroke-width="3"/></svg></button>
            <span class="sep"></span>
            <button type="button" class="trash-red" aria-label="Удалить выделенные"><svg><use href="#trash"/></svg></button>
            <span class="sep"></span>
            <button type="button" aria-label="Выделить по выражению"><svg viewBox="0 0 24 24"><use href="#eps" x="2" width="12" height="15"/><path d="M11.500 12.500h10v10h-10z" fill="#fbee33" stroke="#b8a51f" stroke-dasharray="2 1"/></svg></button>
            <button type="button" aria-label="Снять выделение"><svg viewBox="0 0 24 24"><path d="M3.500 4.500h12v12h-12z" fill="#f9e52f" stroke="#b09c20"/><path d="M13 13h10v10H13z" fill="#d04048"/><circle cx="18" cy="18" r="3" fill="none" stroke="#fff" stroke-width="1.300"/></svg></button>
            <button type="button" aria-label="Выделенное наверх"><svg viewBox="0 0 24 24"><path d="M2.500 2.500h19v11h-19z" fill="#d8e4ee" stroke="#7b93a5"/><path d="M2.500 16.500h19v4h-19z" fill="#f3de2f" stroke="#b09c20"/><path d="M12 4l5 5h-3v6h-4V9H7z" fill="#3d6d98"/><path d="M4 5.500h4M16 5.500h4M4 8h3" stroke="#7b93a5"/></svg></button>
            <button type="button" aria-label="Обратить выделение"><svg viewBox="0 0 24 24"><path d="M3 3v18h18z" fill="#e8df3c" stroke="#a5a53a"/><path d="M5 9q3-7 10-5l1-3 5 6-7 3 1-3q-4-1-5 3zM20 14q-3 7-10 5l-1 3-5-6 7-3-1 3q4 1 5-3z" fill="#5aa05c" stroke="#3f7a44" stroke-width=".7"/></svg></button>
            <button type="button" aria-label="Переместиться"><svg><use href="#movesel"/></svg></button>
            <button type="button" aria-label="Увеличить"><svg viewBox="0 0 24 24"><path d="M2 2h9v13H2z" fill="#f5dd2c" stroke="#333" stroke-dasharray="2"/><use href="#mag"/></svg></button>
            <button type="button" aria-label="Копировать"><svg viewBox="0 0 24 24"><path d="M9.500 3.500h8l3 3v12h-11z" fill="#f4edb0" stroke="#aaa476"/><path d="M4.500 6.500h7l3 3v12h-10z" fill="#f8f8f8" stroke="#999"/><path d="M7 12h5M7 15h5M7 18h5" stroke="#888"/></svg></button>
            <span class="sep"></span>
            <button type="button" aria-label="Удалить поле"><svg viewBox="0 0 24 24"><path d="M2 2h19v18H2z" fill="#c8d6e0"/><path d="M2 5h19M2 9h19M2 13h19M2 17h19" stroke="#8ea0ae"/><path d="M8.500 2.500h5v18h-5z" fill="#f3de2f" stroke="#b09c20"/><path d="M13 13h10v10H13z" fill="#d8505c"/><path d="M15.500 15.500l5 5M20.500 15.500l-5 5" stroke="#fff" stroke-width="1.600"/></svg></button>
            <button type="button" aria-label="Новое поле"><svg viewBox="0 0 24 24"><path d="M2 2h19v18H2z" fill="#c8d6e0"/><path d="M2 5h19M2 9h19M2 13h19M2 17h19" stroke="#8ea0ae"/><path d="M8.500 2.500h5v18h-5z" fill="#f3de2f" stroke="#b09c20"/><use href="#star" x="13" y="13" width="10" height="10"/></svg></button>
            <button type="button" aria-label="Калькулятор полей"><svg><use href="#abacus"/></svg></button>
            <a href="#" class="help-link">Справка</a>
        </div>
        <div class="attr-filter">
            <div class="combo field">
                <select aria-label="Поле"><option>NUTS0_ID</option></select>
                <span class="drop"></span>
            </div>
            <span class="equals">=</span>
            <button type="button" class="expr" aria-label="Выражение"><svg viewBox="0 0 12 16"><use href="#eps"/></svg></button>
            <div class="combo value">
                <input type="text" aria-label="Значение">
                <span class="drop"></span>
            </div>
            <button type="button" class="btn update">Обновить все</button>
            <button type="button" class="btn update-sel" disabled>Обновить выделенные</button>
        </div>
        <div class="table-area">
            <table>
                <colgroup><col class="num"><col span="11"></colgroup>
                <thead>
                    <tr><th></th><th>DENS_ID</th><th>DENSITY</th><th>AREA</th><th>PERIMETER</th><th>X_COORD</th><th>Y_COORD</th><th>NULL</th><th>regions_li</th><th>regions__1</th><th>2013</th><th class="cut">20</th></tr>
                </thead>
                <tbody>
                    <tr><th>0</th><td>995</td><td>0.00000</td><td>220215403.34921</td><td>98469.49244</td><td>27.55229</td><td>53.89673</td><td>0</td><td class="text">75.3</td><td class="text">75.5</td><td>75.3</td><td></td></tr>
                    <tr><th>1</th><td>268</td><td>3.00000</td><td>32539621256.29...</td><td>1136020.19087</td><td>25.38409</td><td>52.45777</td><td>0</td><td class="text">73.1</td><td class="text">73.7</td><td>73.1</td><td></td></tr>
                    <tr><th>2</th><td>273</td><td>3.00000</td><td>40422119892.58...</td><td>1300573.52764</td><td>29.52943</td><td>52.30384</td><td>0</td><td class="text">72.1</td><td class="text">72.5</td><td>72.1</td><td></td></tr>
                    <tr><th>3</th><td>247</td><td>3.00000</td><td>40064707902.85...</td><td>1299827.20983</td><td>28.68111</td><td>55.19541</td><td>0</td><td class="text">71.8</td><td class="text">72.4</td><td>71.8</td><td></td></tr>
                    <tr><th>4</th><td>241</td><td>3.00000</td><td>24860631121.06...</td><td>1091310.29024</td><td>25.10111</td><td>53.85763</td><td>0</td><td class="text">72.2</td><td class="text">73.3</td><td>72.2</td><td></td></tr>
                    <tr><th>5</th><td>256</td><td>3.00000</td><td>28816120116.73...</td><td>1275409.62405</td><td>30.41208</td><td>53.56963</td><td>0</td><td class="text">71.8</td><td class="text">72.4</td><td>71.8</td><td></td></tr>
                    <tr><th>6</th><td>252</td><td>3.00000</td><td>39757319321.82...</td><td>1480700.57345</td><td>27.78374</td><td>53.68223</td><td>0</td><td class="text">71.4</td><td class="text">72</td><td>71.4</td><td></td></tr>
                </tbody>
            </table>
        </div>
        <div class="scrollbar">
            <button type="button" class="left" aria-label="Влево"></button>
            <div class="track"><div class="thumb"></div></div>
            <button type="button" class="left" aria-label="Влево"></button>
            <button type="button" class="right" aria-label="Вправо"></button>
        </div>
        <div class="attr-footer">
            <button type="button" class="btn filter has-menu"><svg><use href="#funnel"/></svg>Все объекты</button>
            <button type="button" class="view" aria-label="Форма"><svg viewBox="0 0 16 16"><path d="M.500 1.500h15v13H.500z" fill="#fff" stroke="#4a6fb8"/><path d="M1 2h14v3H1z" fill="#3f66c8"/><path d="M3 8.500h2M3 11.500h2" stroke="#3f66c8" stroke-width="1.500"/><path d="M7 8.500h6M7 11.500h6" stroke="#111" stroke-width="1.500"/></svg></button>
            <button type="button" class="view on" aria-label="Таблица"><svg><use href="#sheet"/></svg></button>
        </div>
    </section>

    <section class="window dialog" role="dialog" aria-labelledby="dialog-title">
        <header class="window-title">
            <svg class="logo"><use href="#qgis"/></svg>
            <h2 id="dialog-title">Прекратить редактирование</h2>
            <button type="button" class="dialog-close" aria-label="Закрыть"><svg viewBox="0 0 14 12"><path d="M3 2l8 8M11 2l-8 8" stroke="#5c2030" stroke-width="3.600"/><path d="M3 2l8 8M11 2l-8 8" stroke="#fff" stroke-width="2.200"/></svg></button>
        </header>
        <div class="dialog-body">
            <svg class="info" viewBox="0 0 32 32"><path d="M16 1C7 1 1 6 1 13.500c0 6 5 10 11 11.500l7 6.500.500-6.500C26 24 31 20 31 13.500 31 6 25 1 16 1z" fill="url(#bubble)" stroke="#7a9cc4"/><circle cx="16" cy="6" r="2.800" fill="#1c3f94"/><path d="M12 10.500h6V19h2.500v2.500h-9V19H14v-6h-2z" fill="#1c3f94"/></svg>
            <p>Вы хотите сохранить изменения в слое obl_bel_lifelong?</p>
        </div>
        <div class="dialog-actions">
            <button type="button" class="btn default">Сохранить</button>
            <button type="button" class="btn">Отклонить</button>
            <button type="button" class="btn">Отмена</button>
        </div>
    </section>

    <!-- Step markers -->
    <svg class="steps" viewBox="0 0 700 620" width="700" height="620">
        <rect x="173.500" y="143.500" width="43" height="48" rx="9"/>
        <path d="M114 147l39 8-4-8 24 15-28 8 6-9-37-11z"/>
        <path d="M651 536l-28 8 4 6-42 41 48-35 7 7z"/>
        <text x="88" y="154">1</text>
        <text x="553" y="605">2</text>
    </svg>
</body>
</html>
```
FILE: styles.css
```css
* {
    box-sizing: border-box;
}

body {
    margin: 0;
    padding-left: 117px;
    height: 100vh;
    display: flex;
    flex-direction: column;
    position: relative;
    overflow: hidden;
    background: #fff;
    color: #111;
    font-family: "DejaVu Sans Condensed", "Noto Sans", sans-serif;
    font-size: 11px;
    line-height: 14px;
}

button,
input,
select {
    font: inherit;
    color: inherit;
    margin: 0;
    padding: 0;
    border: 0;
    border-radius: 0;
    background: none;
    min-width: 0;
}

button {
    display: flex;
    align-items: center;
    justify-content: center;
    flex: none;
}

select {
    appearance: none;
}

a {
    color: inherit;
    text-decoration: none;
}

h1,
h2,
p {
    margin: 0;
    font-size: 12px;
    line-height: 16px;
}

svg {
    display: block;
    flex: none;
}

.defs {
    position: absolute;
    width: 0;
    height: 0;
}

.logo {
    width: 14px;
    height: 14px;
}

/* Main window */
.titlebar {
    display: flex;
    align-items: center;
    gap: 7px;
    flex: none;
    height: 25px;
    padding-left: 3px;
    background: linear-gradient(#294489, #3c5ba5);
}

.titlebar h1,
.attributes h2 {
    font-family: "Liberation Sans", Arial, sans-serif;
    color: #a3acc4;
}

.winbuttons {
    display: flex;
    align-self: flex-start;
    margin-left: auto;
    border: 1px solid #fff;
    border-top: 0;
    border-radius: 0 0 5px 5px;
    overflow: hidden;
}

.winbuttons button {
    width: 26px;
    height: 17px;
    background: linear-gradient(#b8cdd6, #dbe8ec);
    border-right: 1px solid #44546a;
}

.winbuttons .close {
    width: 42px;
    border-right: 0;
    background: linear-gradient(#e8cfe4, #f6e4f4);
}

.winbuttons svg {
    width: 14px;
    height: 12px;
}

.main-buttons {
    margin-right: 2px;
}

.main-buttons button {
    height: 14px;
}

.menubar {
    display: flex;
    align-items: center;
    gap: 14px;
    flex: none;
    height: 23px;
    padding: 2px 0 0 9px;
    background: #f3f3f3;
    border-bottom: 1px solid #bbb;
}

.toolbar {
    display: flex;
    align-items: center;
    flex: none;
    height: 39px;
    background: #f3f3f3;
    border-bottom: 1px solid #bbb;
}

.toolbar button {
    width: 35px;
    height: 34px;
}

.toolbar svg {
    width: 24px;
    height: 24px;
    overflow: visible;
}

.toolbar .pressed {
    background: #dcdcdc;
    border: 1px solid #8a8a8a;
    border-radius: 3px;
}

.labelbar {
    height: 38px;
}

.grip {
    width: 13px;
    height: 30px;
    flex: none;
    background: radial-gradient(circle, #ccc 1px, transparent 2px) 5px 0 / 4px 5px repeat-y;
}

.grip-h {
    width: 42px;
    height: 13px;
    flex: none;
    background: radial-gradient(circle, #ccc 1px, transparent 2px) 0 6px / 5px 4px repeat-x;
}

.more {
    width: 13px;
    flex: none;
}

.more::before,
.drop::before,
.has-menu::after,
.side-menu::after {
    content: "";
    display: block;
    width: 0;
    border: 4px solid transparent;
    border-top: 5px solid #000;
    border-bottom: 0;
}

.more.off::before {
    border-top-color: #aaa;
}

.has-menu::after {
    align-self: flex-end;
    border-width: 3px;
    border-bottom-width: 0;
    margin: 0 -2px 4px -4px;
}

/* Tiny texts inside icons */
.tiny {
    font: bold 8px "DejaVu Sans Condensed", sans-serif;
    fill: #222;
}

.mono {
    font: bold 8px "DejaVu Sans Condensed", sans-serif;
    fill: #444;
}

.tiny.gray {
    fill: #777;
}

.serif {
    font: bold 14px "Liberation Serif", serif;
    fill: #444;
}

.serif.white {
    fill: #fff;
}

.serif.big {
    font-size: 24px;
    fill: #000;
}

.serif-s {
    font: bold 9px "Liberation Serif", serif;
    fill: #fff;
}

.help {
    font: bold 10px "Liberation Sans", sans-serif;
    fill: #111;
}

/* Workspace */
.workspace {
    display: flex;
    flex: 1;
    min-height: 0;
    background: #f3f3f3;
}

.sidebar {
    display: flex;
    flex-direction: column;
    align-items: center;
    width: 52px;
    flex: none;
}

.sidebar button {
    width: 34px;
    height: 34px;
}

.sidebar svg {
    width: 24px;
    height: 24px;
    overflow: visible;
}

.side-menu {
    position: relative;
}

.side-menu::after {
    position: absolute;
    right: -3px;
    top: 15px;
}

.layers {
    width: 243px;
    margin-right: 6px;
    flex: none;
    background: #fff;
    border: 2px solid #bbb;
    border-top-width: 1px;
}

.map {
    flex: 1;
    min-width: 0;
    overflow: hidden;
    background: #fff;
    border: 1px solid #bbb;
    border-top-width: 2px;
    border-bottom-width: 2px;
}

.map svg {
    width: 100%;
    height: 100%;
}

.land {
    fill: #8005cc;
    stroke: #8005cc;
    stroke-width: 8;
}

.outline {
    fill: #8005cc;
    stroke: #1c0630;
    stroke-width: 4;
    stroke-linejoin: round;
}

.border {
    fill: none;
    stroke: #2d0550;
    stroke-width: 3;
    stroke-linejoin: round;
}

/* Status bar */
.statusbar {
    display: flex;
    align-items: center;
    gap: 7px;
    flex: none;
    height: 31px;
    padding: 0 13px 0 5px;
    background: #f3f3f3;
}

.mouse {
    width: 20px;
    height: 20px;
    border: 1px solid #999;
    border-radius: 3px;
}

.mouse svg {
    width: 16px;
    height: 16px;
}

.statusbar input[type="text"] {
    background: #fff;
}

.coords {
    flex: 1;
    height: 20px;
    border: 1px solid #b5b5b5;
    border-radius: 3px;
    text-align: center;
}

.combo {
    display: flex;
    height: 20px;
    border: 1px solid #b5b5b5;
    border-radius: 3px;
    background: #fff;
    overflow: hidden;
}

.combo select,
.combo input {
    flex: 1;
    padding-left: 4px;
}

.drop {
    display: flex;
    align-items: center;
    justify-content: center;
    width: 16px;
    flex: none;
    border-left: 1px solid #b5b5b5;
    background: linear-gradient(#fff, #e2e2e2);
}

.scale {
    width: 87px;
    margin-left: 4px;
}

.spin {
    display: flex;
    width: 98px;
    height: 24px;
    margin-left: 2px;
    border: 1px solid #b5b5b5;
    border-radius: 2px;
    background: #fff;
}

.spin input {
    flex: 1;
    padding-left: 3px;
}

.spin-buttons {
    display: flex;
    flex-direction: column;
    width: 16px;
    border-left: 1px solid #b5b5b5;
}

.spin-buttons button {
    flex: 1;
    background: linear-gradient(#fff, #e2e2e2);
}

.spin-buttons .up {
    border-bottom: 1px solid #b5b5b5;
}

.up::before,
.down::before {
    content: "";
    border: 4px solid transparent;
    border-top: 0;
    border-bottom: 4px solid #000;
}

.down::before {
    border-top: 4px solid #000;
    border-bottom: 0;
}

.render,
.crs {
    display: flex;
    align-items: center;
    gap: 4px;
}

.render input {
    display: flex;
    align-items: center;
    justify-content: center;
    appearance: none;
    width: 12px;
    height: 12px;
    background: #fff;
    border: 1px solid #ccc;
}

.render input:checked::before {
    content: "✖";
    font: bold 12px "DejaVu Sans", sans-serif;
}

.crs {
    margin: 0 15px 0 12px;
}

.crs svg {
    width: 16px;
    height: 16px;
}

.messages svg {
    width: 18px;
    height: 16px;
}

/* Taskbar */
.taskbar {
    display: flex;
    align-items: center;
    flex: none;
    height: 30px;
    background: linear-gradient(#4568b4, #2c4d9c 40%, #1a3682);
    border-top: 1px solid #5f86e0;
    color: #fff;
    font-family: "Liberation Sans", Arial, sans-serif;
    font-size: 12px;
}

.start {
    width: 48px;
}

.start svg {
    width: 40px;
    height: 30px;
}

.quick {
    display: flex;
    gap: 9px;
    margin-left: 13px;
}

.quick svg,
.tasks svg,
.tray svg {
    width: 14px;
    height: 14px;
}

.tasks {
    display: flex;
    align-self: stretch;
    margin-left: 52px;
}

.tasks button {
    justify-content: flex-start;
    gap: 5px;
    width: 160px;
    padding: 0 8px 0 10px;
}

.tasks .active {
    background: linear-gradient(#1d4bb0, #123b96);
}

.tasks .count {
    color: #e0304a;
    margin-right: -3px;
}

.caret {
    margin-left: auto;
    border: 3px solid transparent;
    border-top-color: #fff;
    border-bottom: 0;
}

.tray {
    display: flex;
    align-items: center;
    gap: 5px;
    margin-left: auto;
    padding-right: 8px;
}

.lang {
    padding: 1px 0;
    margin-right: 6px;
    background: #2a6f9c;
}

.tray .restore {
    width: 12px;
    height: 20px;
}

.tray .chev {
    margin-left: 4px;
}

.tray .avast {
    width: 16px;
    height: 16px;
}

.tray time {
    margin-left: 4px;
}

/* Floating windows */
.window {
    position: absolute;
    display: flex;
    flex-direction: column;
    background: #f3f3f3;
}

.window-title {
    display: flex;
    align-items: center;
    flex: none;
}

.attributes {
    left: 171px;
    right: 149px;
    top: 121px;
    height: 468px;
    border: 4px solid #8496d8;
    border-top: 1px solid #111;
    border-radius: 6px 6px 0 0;
    box-shadow: inset 0 0 0 1px #5f74b8;
}

.attributes .window-title {
    height: 28px;
    margin: 0 -4px;
    padding: 2px 6px 0 7px;
    gap: 7px;
    background: linear-gradient(#50649f, #5f77c4 50%, #93a6ea);
    border-radius: 5px 5px 0 0;
}

.attributes .winbuttons {
    margin-top: -2px;
}

.attributes h2 {
    color: #8d97bd;
}

.attr-tools {
    display: flex;
    align-items: center;
    flex: none;
    height: 33px;
}

.attr-tools button {
    width: 31px;
    height: 30px;
}

.attr-tools svg {
    width: 20px;
    height: 20px;
}

.sep {
    width: 1px;
    height: 26px;
    margin: 0 3px;
    background: #999;
}

.trash-gray {
    color: #888;
}

.trash-red {
    color: #c8202c;
}

.help-link {
    margin-left: auto;
    padding-right: 10px;
}

.attr-filter {
    display: flex;
    align-items: center;
    gap: 4px;
    flex: none;
    height: 27px;
    margin-bottom: 6px;
    padding-left: 3px;
}

.field {
    width: 96px;
    background: linear-gradient(#fff, #e8e8e8);
}

.equals {
    width: 7px;
    text-align: center;
}

.expr {
    width: 26px;
    height: 25px;
    border: 1px solid #888;
    border-radius: 3px;
    background: #fafafa;
}

.expr svg {
    width: 11px;
    height: 14px;
}

.value {
    flex: 1;
    height: 25px;
    margin-left: 2px;
}

.btn {
    height: 22px;
    border: 1px solid #999;
    border-radius: 3px;
    background: linear-gradient(#fff, #ececec);
}

.btn:disabled {
    color: #888;
}

.update {
    width: 86px;
}

.update-sel {
    width: 133px;
}

.table-area {
    flex: 1;
    min-height: 0;
    margin-left: 1px;
    overflow: hidden;
    border-top: 2px solid #a5a5a5;
    background: linear-gradient(90deg, #f3f3f3 16px, #fff 16px);
}

table {
    table-layout: fixed;
    width: 1116px;
    border-collapse: separate;
    border-spacing: 0;
}

col {
    width: 100px;
}

.num {
    width: 16px;
}

th,
td {
    height: 20px;
    padding: 0 3px 4px;
    font-weight: normal;
    line-height: 14px;
    text-align: right;
    white-space: nowrap;
    border-right: 1px solid #888;
    border-bottom: 1px solid #999;
}

thead th {
    padding: 1px 2px 0 0;
    text-align: center;
    background: linear-gradient(#fff, #ebebeb);
    border-color: #777;
}

tbody th {
    padding: 1px 0 0;
    text-align: center;
    background: linear-gradient(#fff, #ebebeb);
}

tbody tr:nth-child(even) td {
    background: #e6e6e6;
}

td.text {
    text-align: left;
}

thead .cut {
    padding-left: 38px;
    text-align: left;
}

.scrollbar {
    display: flex;
    flex: none;
    height: 17px;
    margin: 0 1px;
    border-bottom: 1px solid #aaa;
}

.scrollbar button {
    width: 16px;
    border: 1px solid #999;
    border-radius: 2px;
    background: linear-gradient(#fff, #eee);
}

.scrollbar .left::before,
.scrollbar .right::before {
    content: "";
    border: 4px solid transparent;
    border-left: 0;
    border-right: 5px solid #000;
}

.scrollbar .right::before {
    border-left: 5px solid #000;
    border-right: 0;
}

.track {
    flex: 1;
    padding-left: 30%;
    background: radial-gradient(circle, #e4e4e4 1px, transparent 1px) 0 0 / 3px 3px, #f7f7f7;
}

.thumb {
    display: flex;
    align-items: center;
    justify-content: center;
    width: 91%;
    height: 16px;
    border: 1px solid #888;
    background: linear-gradient(#fff, #e6e6e6);
}

.thumb::before {
    content: "";
    width: 20px;
    height: 6px;
    background: radial-gradient(circle, #aaa 1px, transparent 1px) 0 0 / 4px 3px;
}

.attr-footer {
    display: flex;
    align-items: center;
    flex: none;
    height: 31px;
    padding: 2px 2px 0 3px;
}

.filter {
    width: 101px;
    height: 25px;
    gap: 4px;
    margin-right: auto;
}

.filter svg {
    width: 14px;
    height: 14px;
}

.filter.has-menu::after {
    margin: 0 -2px 2px -3px;
}

.view {
    width: 26px;
    height: 25px;
    border: 1px solid #999;
    border-radius: 3px;
    background: #fafafa;
}

.view.on {
    background: #ddd;
}

.view svg {
    width: 16px;
    height: 16px;
}

.dialog {
    left: 577px;
    top: 424px;
    width: 359px;
    height: 119px;
    border: 2px solid #203a86;
    border-top: 0;
    border-radius: 6px 6px 0 0;
    box-shadow: inset 0 0 0 1px #8fa0d8;
}

.dialog .window-title {
    height: 28px;
    margin: 0 -2px;
    padding: 3px 6px 0;
    gap: 7px;
    background: linear-gradient(#5f7ce0, #2e4aa8 40%, #1b3680);
    border-radius: 6px 6px 0 0;
    color: #fff;
    font-family: "Liberation Sans", Arial, sans-serif;
}

.dialog-close {
    align-self: flex-start;
    margin: -2px 0 0 auto;
    width: 44px;
    height: 18px;
    background: linear-gradient(#e8929a, #c8404e 50%, #c03040);
    border: 1px solid #fff;
    border-top: 0;
    border-radius: 0 0 4px 4px;
}

.dialog-close svg {
    width: 14px;
    height: 12px;
}

.dialog-body {
    display: flex;
    gap: 16px;
    flex: 1;
    padding: 10px 12px 0;
}

.dialog-body p {
    padding-top: 1px;
    font-size: 11px;
    line-height: 14px;
    white-space: nowrap;
}

.info {
    width: 32px;
    height: 32px;
}

.dialog-actions {
    display: flex;
    justify-content: center;
    gap: 10px;
    padding-bottom: 12px;
}

.dialog-actions .btn {
    width: 75px;
    height: 23px;
    background: linear-gradient(#fafafa, #e4e4e4);
    border-color: #bbb;
}

.dialog-actions .default {
    background: linear-gradient(#e8eef2, #ccd6de);
    border: 2px solid #5b7286;
}

.steps {
    position: absolute;
    left: 0;
    top: 0;
    pointer-events: none;
    fill: #ff0a0a;
    filter: drop-shadow(1px 3px 2px rgba(0, 0, 0, 0.5));
}

.steps rect {
    fill: none;
    stroke: #f01414;
    stroke-width: 2;
}

.steps text {
    font: bold 38px "Liberation Sans", Arial, sans-serif;
    stroke: #fff;
    stroke-width: 6px;
    stroke-linejoin: round;
    paint-order: stroke;
}
```
